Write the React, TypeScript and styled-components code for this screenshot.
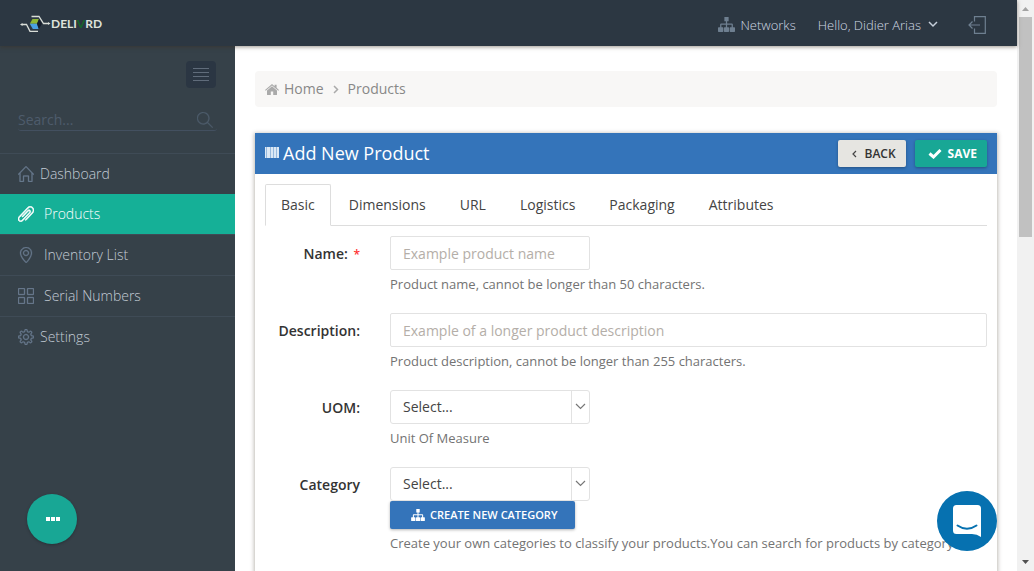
import React from "react";
import styled, { createGlobalStyle } from "styled-components";
import {
  SlHome,
  SlPaperClip,
  SlLocationPin,
  SlGrid,
  SlSettings,
  SlMagnifier,
} from "react-icons/sl";

const GlobalStyle = createGlobalStyle`
  *, *::before, *::after { box-sizing: border-box; }
  body {
    margin: 0;
    background: #fff;
    color: #333;
    font-family: "Open Sans", "Liberation Sans", sans-serif;
    font-size: 14px;
    line-height: 20px;
  }
  button, input, select { font: inherit; }
  a { color: inherit; text-decoration: none; }
`;

const Screen = styled.div`
  display: grid;
  grid-template-columns: minmax(0, 1fr) 17px;
  height: 100vh;
  overflow: hidden;
`;

const App = styled.div`
  display: flex;
  flex-direction: column;
  min-height: 0;
`;

const TopBar = styled.header`
  position: relative;
  z-index: 2;
  display: flex;
  flex: none;
  align-items: center;
  justify-content: space-between;
  height: 46px;
  padding: 0 31px 0 20px;
  background: #2c3742;
  color: #d0d8e2;
  font-size: 13px;
  font-weight: 300;
  box-shadow: 0 1px 4px rgba(60, 45, 30, 0.5);
`;

const TopNav = styled.nav`
  display: flex;
  align-items: center;
  padding-top: 3px;
`;

const TopLink = styled.a<{ $gap: number }>`
  display: flex;
  align-items: center;
  gap: 5px;
  margin-right: ${(p) => p.$gap}px;
`;

const IconLink = styled.a`
  display: flex;
`;

const UserMenu = styled.button`
  display: flex;
  align-items: center;
  gap: 7px;
  margin-right: 30px;
  padding: 0;
  border: 0;
  background: none;
  color: inherit;
`;

const LogoLink = styled.a`
  display: flex;
  align-items: center;
  padding-top: 2px;
`;

const LogoText = styled.span`
  font-family: Lato, "Liberation Sans", sans-serif;
  font-size: 12px;
  font-weight: 700;
  line-height: 16px;
  color: #dfe3dc;
  em {
    font-style: normal;
    color: #14652a;
  }
`;

const Columns = styled.div`
  display: grid;
  grid-template-columns: 235px minmax(0, 1fr);
  flex: 1;
  min-height: 0;
`;

const Sidebar = styled.aside`
  display: flex;
  flex-direction: column;
  min-height: 0;
  background: #364149;
`;

const MenuToggle = styled.button`
  display: flex;
  align-self: flex-end;
  align-items: center;
  justify-content: center;
  width: 30px;
  height: 27px;
  margin: 15px 19px 0 0;
  padding: 0;
  border: 0;
  border-radius: 4px;
  background: #2b3643;
`;

const Search = styled.form`
  display: flex;
  align-items: center;
  height: 24px;
  margin: 19px 18px 22px;
  padding-top: 2px;
  border-bottom: 1px solid #435060;
  border-radius: 3px;
`;

const SearchInput = styled.input`
  flex: 1;
  min-width: 0;
  padding: 0;
  border: 0;
  outline: 0;
  background: none;
  color: #b4bcc8;
  &::placeholder {
    color: #4e5c6c;
    opacity: 1;
  }
`;

const SearchButton = styled.button`
  display: flex;
  padding: 0 4px;
  border: 0;
  background: none;
  color: #4e5c6c;
`;

const NavList = styled.ul`
  margin: 0;
  padding: 0;
  list-style: none;
`;

const NavLink = styled.a<{ $active?: boolean; $gap: number }>`
  display: flex;
  align-items: center;
  gap: ${(p) => p.$gap}px;
  height: ${(p) => (p.$active ? 40 : 41)}px;
  padding: 0 18px;
  border-top: ${(p) => (p.$active ? "0" : "1px solid #3f4b56")};
  background: ${(p) => (p.$active ? "#15b097" : "none")};
  color: ${(p) => (p.$active ? "#fff" : "#c3cbd5")};
  font-weight: 300;
  svg {
    flex: none;
    color: ${(p) => (p.$active ? "#fff" : "#66788c")};
    stroke-width: ${(p) => (p.$active ? 40 : 20)};
  }
`;

const Main = styled.main`
  display: flex;
  flex-direction: column;
  min-height: 0;
  padding: 25px 20px 0;
  background: #fff;
`;

const Breadcrumb = styled.nav`
  display: flex;
  flex: none;
  align-items: center;
  height: 36px;
  margin-bottom: 26px;
  padding: 0 10px;
  border-radius: 4px;
  background: #f8f7f6;
  color: #888;
  a {
    display: flex;
    align-items: center;
    gap: 5px;
  }
  > svg {
    margin: 0 9px;
  }
`;

const Panel = styled.section`
  flex: 1 0 auto;
  background: #fff;
  box-shadow: 0 1px 4px 1px rgba(60, 50, 30, 0.32);
`;

const PanelHead = styled.div`
  display: flex;
  align-items: center;
  height: 41px;
  padding: 0 10px;
  background: #3474ba;
  color: #fff;
  h1 {
    display: flex;
    flex: 1;
    align-items: center;
    gap: 4px;
    margin: 0;
    padding-bottom: 2px;
    font-size: 18px;
    font-weight: 400;
    line-height: 24px;
  }
`;

const Button = styled.button<{ $tone: "light" | "green" | "blue" }>`
  display: inline-flex;
  align-items: center;
  justify-content: center;
  gap: ${(p) => (p.$tone === "blue" ? 5 : 6)}px;
  height: ${(p) => (p.$tone === "blue" ? 28 : 27)}px;
  padding: ${(p) => (p.$tone === "blue" ? "0 18px 0 21px" : "0 10px 0 13px")};
  border: 0;
  border-radius: 2px;
  background: ${(p) => ({ light: "#e6e5e1", green: "#18a795", blue: "#3474ba" })[p.$tone]};
  color: ${(p) => (p.$tone === "light" ? "#333" : "#fff")};
  font-size: ${(p) => (p.$tone === "blue" ? 11 : 12)}px;
  font-weight: ${(p) => (p.$tone === "green" ? 700 : 600)};
  text-transform: uppercase;
  white-space: nowrap;
  box-shadow: 0 1px 3px rgba(0, 0, 0, 0.3);
  & + & {
    margin-left: 9px;
  }
`;

const PanelBody = styled.div`
  padding: 10px 10px 0;
`;

const Tabs = styled.div`
  display: flex;
  gap: 2px;
  margin-bottom: 10px;
  border-bottom: 1px solid #ddd;
`;

const Tab = styled.button<{ $active?: boolean }>`
  height: 42px;
  margin-bottom: -1px;
  padding: 0 15px;
  border: 1px solid ${(p) => (p.$active ? "#ddd" : "transparent")};
  border-bottom-color: ${(p) => (p.$active ? "#fff" : "transparent")};
  border-radius: 2px 2px 0 0;
  background: ${(p) => (p.$active ? "#fff" : "none")};
  color: #444;
`;

const FormRow = styled.div`
  display: grid;
  grid-template-columns: 95px minmax(0, 1fr);
  column-gap: 30px;
  margin-bottom: 20px;
`;

const Label = styled.label`
  padding-top: 8px;
  color: #333;
  text-align: right;
  font-weight: 600;
  white-space: nowrap;
  span {
    margin-left: 2px;
    color: #f33;
    font-size: 12px;
  }
`;

const TextInput = styled.input<{ $short?: boolean }>`
  display: block;
  width: ${(p) => (p.$short ? "200px" : "100%")};
  height: 34px;
  padding: 0 12px;
  border: 1px solid #e2e2e2;
  border-radius: 2px;
  outline: 0;
  background: #fff;
  color: #444;
  &::placeholder {
    color: #b4aea8;
    opacity: 1;
  }
`;

const SelectBox = styled.div`
  position: relative;
  width: 200px;
`;

const Select = styled.select`
  display: block;
  width: 100%;
  height: 34px;
  padding: 0 30px 0 12px;
  border: 1px solid #e2e2e2;
  border-radius: 3px;
  appearance: none;
  background: #fff;
  color: #444;
`;

const SelectArrow = styled.span`
  position: absolute;
  top: 1px;
  right: 1px;
  bottom: 1px;
  display: flex;
  align-items: center;
  justify-content: center;
  width: 18px;
  padding-bottom: 2px;
  border-left: 1px solid #e2e2e2;
  pointer-events: none;
`;

const Help = styled.p`
  margin: 5px 0 0;
  color: #737373;
  font-size: 13px;
  line-height: 18px;
  white-space: nowrap;
`;

const QuickButton = styled.button`
  position: fixed;
  bottom: 27px;
  left: 27px;
  display: flex;
  align-items: center;
  justify-content: center;
  width: 50px;
  height: 50px;
  padding: 0 0 0 2px;
  border: 0;
  border-radius: 50%;
  background: #18a795;
  box-shadow: 0 1px 3px rgba(0, 0, 0, 0.25);
`;

const ChatButton = styled.button`
  position: fixed;
  right: 37px;
  bottom: 20px;
  display: flex;
  align-items: center;
  justify-content: center;
  width: 60px;
  height: 60px;
  padding: 0;
  border: 0;
  border-radius: 50%;
  background: #0671b0;
`;

const ScrollTrack = styled.div`
  display: flex;
  flex-direction: column;
  align-items: center;
  background: #f1f1f1;
`;

const ScrollArrow = styled.svg`
  flex: none;
  width: 17px;
  height: 17px;
`;

const ScrollThumb = styled.div`
  width: 13px;
  height: 220px;
  margin-bottom: auto;
  background: #c1c1c1;
`;

const Sitemap = ({ size, color }: { size: number; color: string }) => (
  <svg width={size} height={Math.round(size * 0.88)} viewBox="0 0 16 14" fill={color} aria-hidden>
    <path d="M6 0h4v4H8.600v2H13q1 0 1 1v2.600h1.400q.6 0 .6.600V13.400q0 .6-.6.600h-3.800q-.6 0-.6-.6V10.200q0-.6.6-.6h1.200V7.200H8.600V9.600h1.200q.6 0 .6.600v3.200q0 .6-.6.600H6.200q-.6 0-.6-.6V10.200q0-.6.6-.6h1.200V7.200H3.200V9.600h1.200q.6 0 .6.600v3.200q0 .6-.6.600H.6q-.6 0-.6-.6V10.200q0-.6.6-.6H2V7q0-1 1-1h4.400V4H6z" />
  </svg>
);

const Chevron = ({
  d,
  width,
  height,
  color,
  stroke = 1.5,
}: {
  d: string;
  width: number;
  height: number;
  color: string;
  stroke?: number;
}) => (
  <svg width={width} height={height} fill="none" stroke={color} strokeWidth={stroke} aria-hidden>
    <path d={d} />
  </svg>
);

const LogoMark = () => (
  <svg width="31" height="18" viewBox="0 0 31 18" fill="none" aria-hidden>
    <path d="M2 9.500h4.500l3.500 6.800h8" stroke="#d9ddd8" strokeWidth="1.300" />
    <path d="M11.500 1.500h7.500l4.500 7H28" stroke="#d9ddd8" strokeWidth="1.300" />
    <path d="M0 9.500l2.500-1.500v3zM30.500 8.500L28 7v3z" fill="#d9ddd8" />
    <path d="M12.500 4H19l-2 4.800H9.800z" fill="#8fb635" />
    <path d="M9.800 8.800H17l1.800 5.200h-6z" fill="#4aa0e2" />
    <path d="M19 4l3 4.800-3.200 5.200L17 8.800z" fill="#151c2a" />
  </svg>
);

const navItems = [
  { label: "Dashboard", icon: SlHome, gap: 6 },
  { label: "Products", icon: SlPaperClip, gap: 10, active: true },
  { label: "Inventory List", icon: SlLocationPin, gap: 10 },
  { label: "Serial Numbers", icon: SlGrid, gap: 10 },
  { label: "Settings", icon: SlSettings, gap: 6 },
];

const tabs = ["Basic", "Dimensions", "URL", "Logistics", "Packaging", "Attributes"];

const Dropdown = ({ id }: { id: string }) => (
  <SelectBox>
    <Select id={id}>
      <option>Select...</option>
    </Select>
    <SelectArrow>
      <Chevron d="M1 1l4.500 4.500L10 1" width={11} height={7} color="#777" stroke={1.2} />
    </SelectArrow>
  </SelectBox>
);

export default function ProductPage() {
  return (
    <Screen>
      <GlobalStyle />
      <App>
        <TopBar>
          <LogoLink href="#" aria-label="Delivrd">
            <LogoMark />
            <LogoText>
              DELI<em>V</em>RD
            </LogoText>
          </LogoLink>
          <TopNav>
            <TopLink href="#" $gap={22}>
              <Sitemap size={17} color="#6e7f90" />
              Networks
            </TopLink>
            <UserMenu type="button">
              Hello, Didier Arias
              <Chevron d="M1 1l4 4 4-4" width={10} height={7} color="#c6cfda" />
            </UserMenu>
            <IconLink href="#" aria-label="Log out">
              <svg width="18" height="18" fill="none" stroke="#6e7f90" strokeWidth="1.200">
                <path d="M6.500 5.500V.6h10.800v16.800H6.500V12.500M1 9h11M4.500 5.500L1 9l3.500 3.500" />
              </svg>
            </IconLink>
          </TopNav>
        </TopBar>
        <Columns>
          <Sidebar>
            <MenuToggle type="button" aria-label="Toggle menu">
              <svg width="16" height="13" stroke="#606c7b" aria-hidden>
                <path d="M0 .5h16M0 4.500h16M0 8.500h16M0 12.500h16" />
              </svg>
            </MenuToggle>
            <Search>
              <SearchInput placeholder="Search..." aria-label="Search" />
              <SearchButton type="button" aria-label="Submit search">
                <SlMagnifier size={16} strokeWidth={20} />
              </SearchButton>
            </Search>
            <NavList>
              {navItems.map(({ label, icon: Icon, gap, active }) => (
                <li key={label}>
                  <NavLink href="#" $gap={gap} $active={active}>
                    <Icon size={16} />
                    {label}
                  </NavLink>
                </li>
              ))}
            </NavList>
          </Sidebar>
          <Main>
            <Breadcrumb aria-label="Breadcrumb">
              <a href="#">
                <svg width="14" height="11" viewBox="0 0 14 11" fill="#aaa" aria-hidden>
                  <path d="M7 2.300l5 4.200V10.500q0 .5-.5.5H8.200V7.600H5.800V11H2.500q-.5 0-.5-.5V6.500zM7 0l2.600 2.200V.7h2v3.100L14 5.900l-.7.8L7 1.500.7 6.700 0 5.900z" />
                </svg>
                Home
              </a>
              <Chevron d="M1 1l3.500 3.500L1 8" width={6} height={9} color="#aaa" />
              <a href="#">Products</a>
            </Breadcrumb>
            <Panel>
              <PanelHead>
                <h1>
                  <svg width="14" height="11" fill="#dce9f5" aria-hidden>
                    <path d="M0 0h1v11H0zM2 0h3v11H2zM6 0h2v11H6zM9 0h2v11H9zM12 0h2v11h-2z" />
                    <path d="M0 0h14v11H0z" opacity=".6" />
                  </svg>
                  Add New Product
                </h1>
                <Button type="button" $tone="light">
                  <Chevron d="M5 1L2 4l3 3" width={7} height={8} color="#444" stroke={1.2} />
                  Back
                </Button>
                <Button type="submit" $tone="green">
                  <svg width="14" height="10" fill="none" stroke="#fff" strokeWidth="3" aria-hidden>
                    <path d="M1.500 4.500l4 3.500 7-7" />
                  </svg>
                  Save
                </Button>
              </PanelHead>
              <PanelBody>
                <Tabs role="tablist">
                  {tabs.map((t, i) => (
                    <Tab key={t} type="button" role="tab" aria-selected={i === 0} $active={i === 0}>
                      {t}
                    </Tab>
                  ))}
                </Tabs>
                <FormRow>
                  <Label htmlFor="name">
                    Name: <span>*</span>
                  </Label>
                  <div>
                    <TextInput id="name" $short placeholder="Example product name" />
                    <Help>Product name, cannot be longer than 50 characters.</Help>
                  </div>
                </FormRow>
                <FormRow>
                  <Label htmlFor="description">Description:</Label>
                  <div>
                    <TextInput id="description" placeholder="Example of a longer product description" />
                    <Help>Product description, cannot be longer than 255 characters.</Help>
                  </div>
                </FormRow>
                <FormRow>
                  <Label htmlFor="uom">UOM:</Label>
                  <div>
                    <Dropdown id="uom" />
                    <Help>Unit Of Measure</Help>
                  </div>
                </FormRow>
                <FormRow>
                  <Label htmlFor="category">Category</Label>
                  <div>
                    <Dropdown id="category" />
                    <Button type="button" $tone="blue">
                      <Sitemap size={14} color="#fff" />
                      Create new category
                    </Button>
                    <Help>
                      Create your own categories to classify your products.You can search for products by category
                    </Help>
                  </div>
                </FormRow>
              </PanelBody>
            </Panel>
          </Main>
        </Columns>
      </App>
      <ScrollTrack aria-hidden>
        <ScrollArrow fill="#a3a3a3">
          <path d="M5 11l3.500-4L12 11z" />
        </ScrollArrow>
        <ScrollThumb />
        <ScrollArrow fill="#505050">
          <path d="M5 6l3.500 4L12 6z" />
        </ScrollArrow>
      </ScrollTrack>
      <QuickButton type="button" aria-label="Quick actions">
        <svg width="15" height="4" fill="#fff" aria-hidden>
          <path d="M0 0h4v4H0zM5 0h4v4H5zM10 0h4v4h-4z" />
        </svg>
      </QuickButton>
      <ChatButton type="button" aria-label="Open chat">
        <svg width="28" height="32" viewBox="0 0 28 32" aria-hidden>
          <path d="M3.500 0h21Q28 0 28 3.500V32q-4-2.800-9-3H3.500Q0 29 0 25.500v-22Q0 0 3.500 0z" fill="#fff" />
          <path d="M4.500 20.500q9.500 6.500 19 0" fill="none" stroke="#0671b0" strokeWidth="2" strokeLinecap="round" />
        </svg>
      </ChatButton>
    </Screen>
  );
}
